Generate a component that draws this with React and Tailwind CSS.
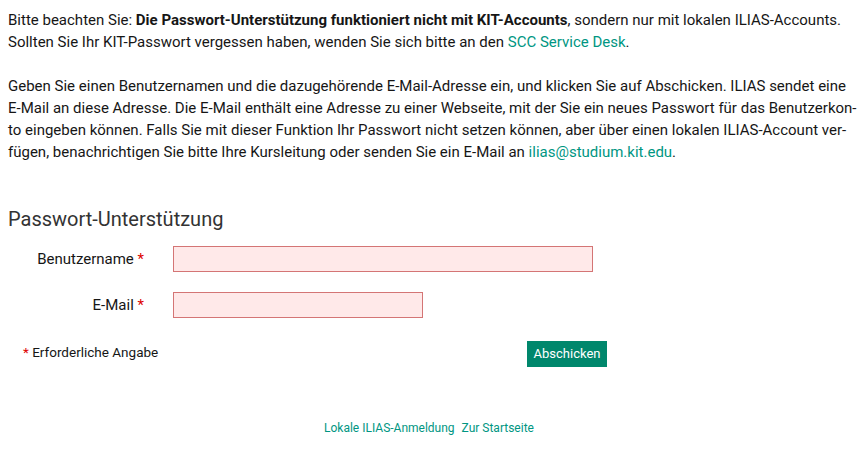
const introLines = [
  "Geben Sie einen Benutzernamen und die dazugehörende E-Mail-Adresse ein, und klicken Sie auf Abschicken. ILIAS sendet eine",
  "E-Mail an diese Adresse. Die E-Mail enthält eine Adresse zu einer Webseite, mit der Sie ein neues Passwort für das Benutzerkon-",
  "to eingeben können. Falls Sie mit dieser Funktion Ihr Passwort nicht setzen können, aber über einen lokalen ILIAS-Account ver-",
];

export default function App() {
  return (
    <div className="min-h-screen bg-white px-2 pt-[9px] font-['Roboto',sans-serif] text-[#161616]">
      {/* Intro text */}
      <p className="text-[15px] leading-[22px] whitespace-nowrap">
        Bitte beachten Sie: <strong className="font-bold">Die Passwort-Unterstützung funktioniert nicht mit KIT-Accounts</strong>, sondern nur mit lokalen ILIAS-Accounts.
        <br />
        Sollten Sie Ihr KIT-Passwort vergessen haben, wenden Sie sich bitte an den{" "}
        <a href="#" className="text-[#009682]">SCC Service Desk</a>.
      </p>
      <div className="mt-[22px] w-[838px] text-[15px] leading-[22px]">
        {introLines.map((line) => (
          <div key={line} className="text-justify [text-align-last:justify] whitespace-nowrap">
            {line}
          </div>
        ))}
        <div>
          fügen, benachrichtigen Sie bitte Ihre Kursleitung oder senden Sie ein E-Mail an{" "}
          <a href="#" className="text-[#009682]">ilias@studium.kit.edu</a>.
        </div>
      </div>

      {/* Form */}
      <h2 className="mt-[42px] text-[20px] leading-[28px] text-[#333]">Passwort-Unterstützung</h2>
      <div className="mt-[13px] flex items-center">
        <label className="w-[136px] text-right text-[15px]">
          Benutzername <span className="text-[#d00]">*</span>
        </label>
        <input className="ml-[29px] h-[26px] w-[420px] border border-[#d47575] bg-[#ffe9e9]" />
      </div>
      <div className="mt-[20px] flex items-center">
        <label className="w-[136px] text-right text-[15px]">
          E-Mail <span className="text-[#d00]">*</span>
        </label>
        <input className="ml-[29px] h-[26px] w-[250px] border border-[#d47575] bg-[#ffe9e9]" />
      </div>
      <div className="mt-[24px] flex items-start">
        <div className="w-[519px] pl-[15px] text-[13.5px] leading-[20px]">
          <span className="text-[#d00]">*</span> Erforderliche Angabe
        </div>
        <button className="mt-[-1px] h-[26px] w-[80px] bg-[#00876c] text-[13px] text-white">
          Abschicken
        </button>
      </div>

      {/* Footer links */}
      <div className="mt-[52px] flex justify-center gap-[7px] text-[12px] text-[#009682]">
        <a href="#">Lokale ILIAS-Anmeldung</a>
        <a href="#">Zur Startseite</a>
      </div>
    </div>
  );
}
